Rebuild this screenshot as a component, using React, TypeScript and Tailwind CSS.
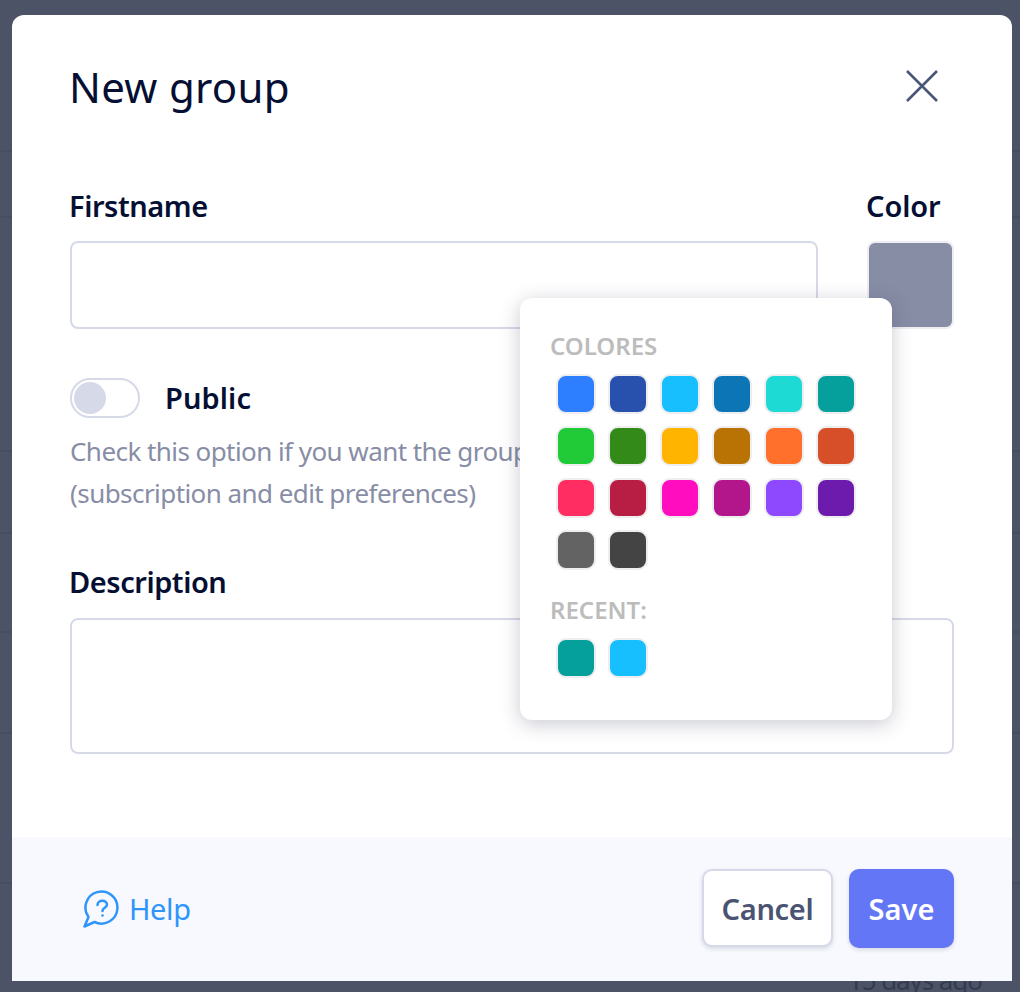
const PALETTE = [
  "#2e7fff", "#2850ad", "#17bfff", "#0c75b6", "#1ddbd4", "#06a09c",
  "#20cb37", "#348a18", "#ffb400", "#b87304", "#ff702d", "#d64f28",
  "#ff2d62", "#b81e43", "#ff0dbe", "#b2168a", "#8e49ff", "#6c1bad",
  "#636363", "#444444",
];
const RECENT = ["#06a09c", "#17bfff"];

function Swatch({ color }: { color: string }) {
  return (
    <div className="w-10 h-10 rounded-[10px] border-2 border-[#eeeef0]" style={{ backgroundColor: color }} />
  );
}

export default function App() {
  return (
    <div className="relative w-[1020px] h-[992px] overflow-hidden bg-[#4d5367] font-['Noto_Sans',sans-serif]">
      <div className="flex flex-col">
        <div className="h-[152px] border-b-2 border-[#474d62]" />
        <div className="h-[66px] border-b-2 border-[#474d62]" />
        <div className="h-[234px] border-b-2 border-[#474d62]" />
        <div className="h-[82px] border-b-2 border-[#474d62]" />
        <div className="h-[99px] border-b-2 border-[#474d62]" />
        <div className="h-[101px] border-b-2 border-[#474d62]" />
        <div className="h-[150px] border-b-2 border-[#474d62]" />
        <div className="pl-[848px] pt-[79px] text-[26px] leading-[34px] text-[#333a50] tracking-[-1.1px] whitespace-nowrap">15 days ago</div>
      </div>

      <div className="absolute left-3 top-[15px] w-[1000px] h-[966px] bg-white rounded-t-[12px] flex flex-col">
        <div className="relative flex-1 px-[58px]">
          <div className="flex items-center justify-between h-[173px] pb-[30px]">
            <h1 className="text-[42px] leading-[48px] text-[#050f33] tracking-[0.3px] -ml-[1px]">New group</h1>
            <svg width="32" height="32" viewBox="0 0 32 32" fill="none" stroke="#4a5678" strokeWidth="2.6" className="mr-[16px] mb-[1px]">
              <path d="M1 1 L31 31 M31 1 L1 31" />
            </svg>
          </div>

          <div className="flex gap-[49px]">
            <div className="w-[748px]">
              <div className="text-[29px] leading-[36px] font-semibold text-[#050f33] tracking-[-0.45px] -ml-[1px]">Firstname</div>
              <div className="mt-[17px] h-[88px] rounded-[8px] border-2 border-[#d6d9e8]" />
            </div>
            <div className="w-[87px]">
              <div className="text-[29px] leading-[36px] font-semibold text-[#050f33] tracking-[-0.1px] -ml-[1px]">Color</div>
              <div className="mt-[17px] h-[88px] rounded-[8px] border-2 border-[#eeeef2] bg-[#888da6]" />
            </div>
          </div>

          <div className="mt-[49px] flex items-center gap-[26px]">
            <div className="w-[70px] h-10 rounded-full border-2 border-[#d6d9e8] flex items-center pl-[2px]">
              <div className="w-8 h-8 rounded-full bg-[#d6d9e8]" />
            </div>
            <span className="text-[29px] leading-[36px] font-semibold text-[#050f33] tracking-[0.1px] -ml-[1px]">Public</span>
          </div>
          <p className="mt-[12px] text-[26px] leading-[42px] text-[#888da6] tracking-[-0.56px] whitespace-nowrap">
            Check this option if you want the group<br />(subscription and edit preferences)
          </p>

          <div className="mt-[50px] text-[29px] leading-[36px] font-semibold text-[#050f33] tracking-[-0.45px] -ml-[1px]">Description</div>
          <div className="mt-[18px] h-[136px] rounded-[8px] border-2 border-[#d6d9e8]" />

          <div className="absolute left-[508px] top-[283px] w-[372px] h-[422px] bg-white rounded-[12px] shadow-[0_4px_20px_rgba(40,45,70,0.25)] pl-[31px] pt-[30px]">
            <div className="text-[24px] leading-[36px] font-semibold text-[#bcbcbc] -ml-[1px]">COLORES</div>
            <div className="mt-[10px] ml-[5px] grid grid-cols-[repeat(6,40px)] gap-3">
              {PALETTE.map((c, i) => <Swatch key={i} color={c} />)}
            </div>
            <div className="mt-[22px] text-[24px] leading-[36px] font-semibold text-[#bcbcbc] -ml-[1px]">RECENT:</div>
            <div className="mt-[10px] ml-[5px] flex gap-3">
              {RECENT.map((c, i) => <Swatch key={i} color={c} />)}
            </div>
          </div>
        </div>

        <div className="h-[144px] bg-[#f7f9fe] flex items-center justify-between pl-[71px] pr-[58px]">
          <div className="flex items-center gap-[8px] text-[#2f95fb]">
            <svg width="38" height="38" viewBox="0 0 38 38" fill="none" stroke="#2f95fb" strokeWidth="2.500">
              <path d="M5.500 27 A16 16 0 1 1 11.500 32 L1.500 36.500 Z" strokeLinejoin="round" />
              <path d="M14.500 15 C14.500 9.500 24 9.500 24 14.500 C24 18 19.500 17.500 19.500 21" strokeLinecap="round" />
              <circle cx="19.500" cy="25.500" r="1.300" fill="#2f95fb" stroke="none" />
            </svg>
            <span className="text-[29px] leading-[36px] tracking-[-0.4px]">Help</span>
          </div>
          <div className="flex items-center gap-4 mb-[2px]">
            <button className="w-[131px] h-[78px] pt-[2px] rounded-[10px] border-2 border-[#d6d9e8] bg-white shadow-[0_2px_4px_rgba(40,45,70,0.15)] text-[29px] font-semibold text-[#4a5372] tracking-[-0.3px]">Cancel</button>
            <button className="w-[105px] h-[79px] pt-[2px] rounded-[10px] bg-[#6376f5] shadow-[0_2px_4px_rgba(40,45,70,0.15)] text-[29px] font-semibold text-white tracking-[0.1px]">Save</button>
          </div>
        </div>
      </div>
    </div>
  );
}
